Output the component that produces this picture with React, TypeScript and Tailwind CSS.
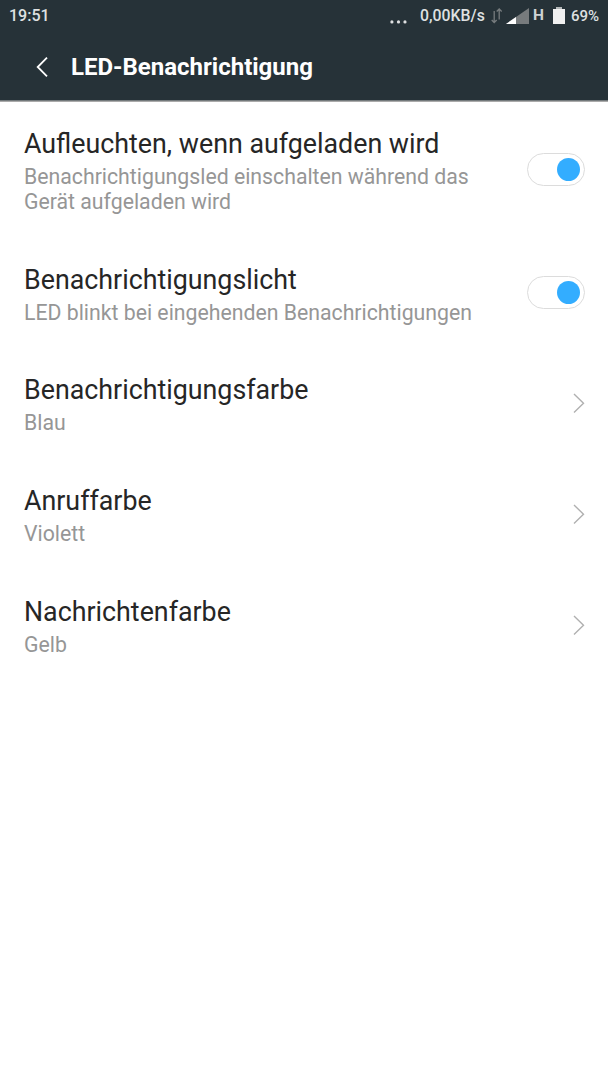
import React from 'react';

type Item = { title: string; sub: string; toggle?: boolean; height: string; offset: string };

const items: Item[] = [
  { title: 'Aufleuchten, wenn aufgeladen wird', sub: 'Benachrichtigungsled einschalten während das Gerät aufgeladen wird', toggle: true, height: 'h-[136px]', offset: 'pt-[25px]' },
  { title: 'Benachrichtigungslicht', sub: 'LED blinkt bei eingehenden Benachrichtigungen', toggle: true, height: 'h-[110px]', offset: 'pt-[12px]' },
  { title: 'Benachrichtigungsfarbe', sub: 'Blau', height: 'h-[111px]', offset: 'pt-[19px]' },
  { title: 'Anruffarbe', sub: 'Violett', height: 'h-[111px]', offset: 'pt-[19px]' },
  { title: 'Nachrichtenfarbe', sub: 'Gelb', height: 'h-[111px]', offset: 'pt-[19px]' },
];

function Toggle() {
  return (
    <div className="flex h-[33px] w-[58px] shrink-0 items-center justify-end rounded-full border border-[#dcdcdc] bg-white pr-[4px]">
      <div className="size-[23px] rounded-full bg-[#33adff]" />
    </div>
  );
}

function Chevron() {
  return (
    <svg width="12" height="20" viewBox="0 0 12 20" className="shrink-0" fill="none" stroke="#b0b0b0" strokeWidth="1.4">
      <path d="M1 1 10.5 10.2 1 19.4" />
    </svg>
  );
}

export default function App() {
  return (
    <div className="h-[1080px] w-[608px] overflow-hidden bg-white font-['Roboto',sans-serif]">
      <header className="h-[102px] bg-[#263238] text-white">
        <div className="flex h-8 items-center pl-[9px] pr-[9px] text-[16px] font-medium text-[#dfe1e2]">
          <span className="flex-1">19:51</span>
          <svg width="17" height="4" className="mr-[13px] mt-3" fill="#dfe1e2">
            <circle cx="1.9" cy="1.9" r="1.6" /><circle cx="8.5" cy="1.9" r="1.6" /><circle cx="15" cy="1.9" r="1.6" />
          </svg>
          <span className="w-[65px] whitespace-nowrap text-[15.8px]">0,00KB/s</span>
          <svg width="12" height="16" viewBox="0 0 12 16" className="ml-[6px]" fill="none" stroke="#777c7e" strokeWidth="1.3">
            <path d="M3.2 3v11.5M.7 12 3.2 14.5 5.7 12M8.2 11.5V1M5.7 3.5 8.2 1 10.7 3.5" />
          </svg>
          <svg width="23" height="16" className="ml-[3px]">
            <path d="M0 16 23 0V16Z" fill="#777b7d" /><path d="M0 16 10 9V16Z" fill="white" />
          </svg>
          <span className="ml-[4px] text-[15.5px] font-bold text-[#cfd2d3]">H</span>
          <svg width="12" height="17" className="mb-[2px] ml-[9px]" fill="#f0f0f0"><path d="M0 2h12v15H0Z" /><path d="M3 0h6v2H3Z" fill="#b5b9ba" /></svg>
          <span className="ml-[6px] w-[28px] whitespace-nowrap text-[15px]">69%</span>
        </div>
        <div className="flex h-[68px] items-center pl-[36px] pt-[2px]">
          <svg width="12" height="20" viewBox="0 0 12 20" fill="none" stroke="white" strokeWidth="1.8"><path d="M11 .7 1.7 10 11 19.3" /></svg>
          <h1 className="ml-[23px] text-[24px] font-bold">LED-Benachrichtigung</h1>
        </div>
        <div className="h-px bg-[#73797b]" />
        <div className="h-px bg-[#aaaaaa]" />
      </header>
      <main className="pt-[26px]">
        {items.map((item) => (
          <section key={item.title} className={`flex pl-6 pr-[23px] ${item.height}`}>
            <div className="w-[480px]">
              <h2 className="text-[26.8px] leading-[33px] text-[#262626]">{item.title}</h2>
              <p className="mt-[3px] text-[21.25px] leading-[25px] text-[#969696]">{item.sub}</p>
            </div>
            <div className={`ml-auto ${item.offset}`}>{item.toggle ? <Toggle /> : <Chevron />}</div>
          </section>
        ))}
      </main>
    </div>
  );
}
